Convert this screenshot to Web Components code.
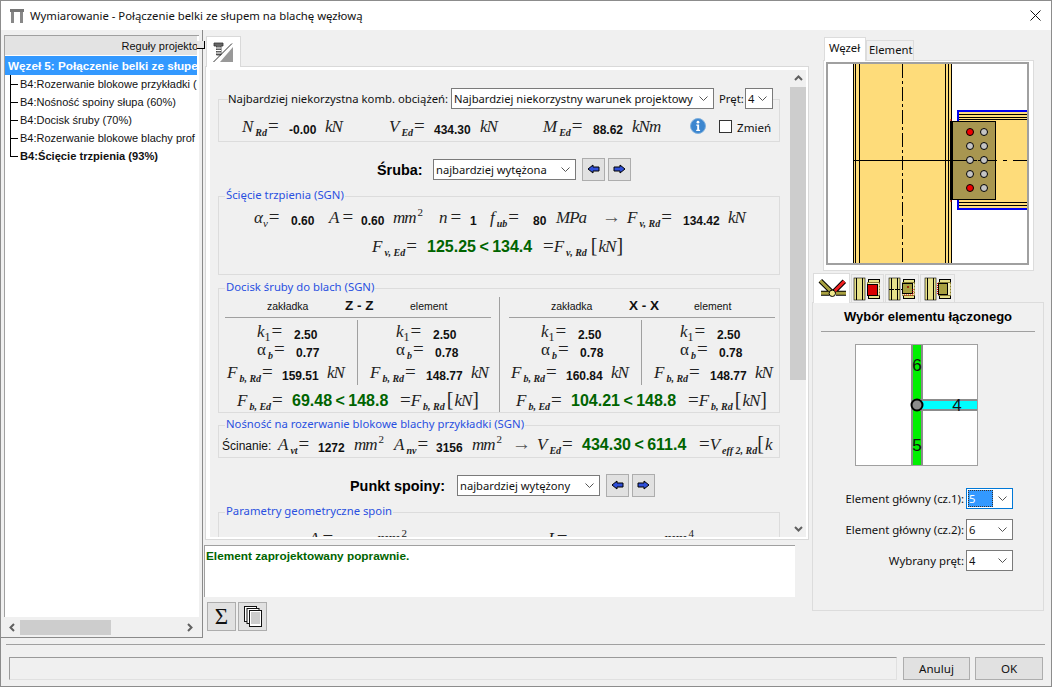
<!DOCTYPE html>
<html lang="pl">
<head>
<meta charset="utf-8">
<title>Wymiarowanie</title>
<style>
	html, body { margin: 0; background: #f0f0f0; }
</style>
</head>
<body>
<app-window></app-window>
<script>
const UI_FONT = `"Noto Sans", sans-serif`;
const ARIAL = `"Liberation Sans", sans-serif`;
const SERIF = `"Liberation Serif", serif`;

class Base extends HTMLElement {
	constructor() {
		super();
		this.attachShadow({ mode: "open" });
	}
	connectedCallback() {
		this.shadowRoot.innerHTML = `<style>${this.styles()}</style>${this.markup()}`;
	}
	styles() { return ":host { display: block; }"; }
	markup() { return "<slot></slot>"; }
	attr(name, fallback = "") { return this.getAttribute(name) ?? fallback; }
}

/* ---------- small widgets ---------- */

class UiSelect extends Base {
	styles() {
		return `
			:host { display: block; box-sizing: border-box; height: 21px; background: #fff; border: 1px solid #7a7a7a;
				font: 11.2px ${UI_FONT}; color: #111; }
			.box { display: flex; align-items: center; height: 100%; padding-left: 2px; white-space: nowrap; overflow: hidden; }
			.txt { flex: 1; overflow: hidden; }
			:host([focused]) { border-color: #0078d7; }
			:host([focused]) .txt { flex: none; width: 24px; background: #3399ff; color: #fff; outline: 1px dotted #333; outline-offset: -1px; margin-right: auto; padding-left: 1px; margin-left: -1px; line-height: 17px; }
			svg { flex: none; margin: 0 5px 0 3px; }
		`;
	}
	markup() {
		return `<div class="box"><span class="txt"><slot></slot></span>
			<svg width="9" height="5" viewBox="0 0 9 5"><path d="M.5.5 4.5 4.5 8.5.5" fill="none" stroke="#555"/></svg></div>`;
	}
}

class ArrowBtn extends Base {
	styles() {
		return `:host { display: block; box-sizing: border-box; width: 23px; height: 23px; background: #e1e1e1; border: 1px solid #adadad; }
			svg { display: block; margin: 5px 0 0 4px; }`;
	}
	markup() {
		const left = this.attr("dir") === "left";
		const pts = left ? "1,5 6,1 6,3 12,3 12,7 6,7 6,9" : "12,5 7,1 7,3 1,3 1,7 7,7 7,9";
		return `<svg width="13" height="10" viewBox="0 0 13 10"><polygon points="${pts}" fill="#2f4fd8" stroke="#000"/></svg>`;
	}
}

class UiScroll extends Base {
	styles() {
		const horizontal = this.attr("dir") === "h";
		return `:host { display: flex; flex-direction: ${horizontal ? "row" : "column"}; background: #f0f0f0; }
			.end { flex: none; display: flex; align-items: center; justify-content: center; ${horizontal ? "width: 15px" : "height: 17px"}; }
			.thumb { flex: none; background: #cdcdcd; ${horizontal ? `width: ${this.attr("size")}px` : `height: ${this.attr("size")}px`}; }
			.rest { flex: 1; }`;
	}
	markup() {
		const horizontal = this.attr("dir") === "h";
		const chev = (d) => `<svg width="9" height="9" viewBox="0 0 9 9"><path d="${d}" fill="none" stroke="#606060" stroke-width="2"/></svg>`;
		const first = horizontal ? "M6 1 2.5 4.5 6 8" : "M1 6 4.5 2.5 8 6";
		const last = horizontal ? "M3 1 6.5 4.5 3 8" : "M1 3 4.5 6.5 8 3";
		return `<div class="end">${chev(first)}</div><div class="thumb"></div><div class="rest"></div><div class="end">${chev(last)}</div>`;
	}
}

/* ---------- title bar ---------- */

class TitleBar extends Base {
	styles() {
		return `:host { display: flex; align-items: center; background: #fff; font: 11.33px ${UI_FONT}; color: #111; padding-left: 9px; }
			.name { margin-left: 6px; flex: 1; white-space: nowrap; }
			.close { margin-right: 10px; }`;
	}
	markup() {
		return `<svg width="14" height="14" viewBox="0 0 14 14">
				<rect x="0" y="0" width="14" height="3" fill="#777"/>
				<rect x="1" y="3" width="3" height="11" fill="#888"/><rect x="10" y="3" width="3" height="11" fill="#888"/>
			</svg>
			<span class="name">Wymiarowanie - Połączenie belki ze słupem na blachę węzłową</span>
			<svg class="close" width="11" height="11" viewBox="0 0 11 11"><path d="M.5.5 10.5 10.5M10.5.5.5 10.5" stroke="#111" fill="none"/></svg>`;
	}
}

/* ---------- tree ---------- */

class TreeItem extends Base {
	styles() {
		const stem = this.hasAttribute("last") ? "50%" : "100%";
		return `:host { display: flex; height: 18px; align-items: center; font: ${this.hasAttribute("last") ? "bold 11.15px" : "11px"} ${ARIAL}; color: #111; white-space: nowrap; }
			.conn { flex: none; align-self: stretch; width: 8px; margin: 0 2px 0 5px;
				background: linear-gradient(#000,#000) left top / 1px ${stem} no-repeat, linear-gradient(#000,#000) left center / 100% 1px no-repeat; }`;
	}
	markup() {
		return `<span class="conn"></span><slot></slot>`;
	}
}

class TreePanel extends Base {
	styles() {
		return `:host { display: block; position: relative; box-sizing: border-box; height: 608px; padding: 5px 0 0 3px; border-right: 1px solid #8a8a8a; border-bottom: 1px solid #8a8a8a; }
			.box { box-sizing: border-box; width: 195px; height: 582px; background: #fff; border-left: 1px solid #a0a0a0; border-top: 1px solid #a0a0a0; }
			.clip { width: 192px; overflow: hidden; }
			.head { height: 19px; background: #e3e3e3; text-align: right; font: 11px/20px ${ARIAL}; color: #111; white-space: nowrap; margin-bottom: 1px; }
			.head span { margin-right: -1px; }
			.root { height: 19px; padding-left: 3px; background: #3399ff; color: #fff; font: bold 11.7px/19px ${ARIAL}; white-space: nowrap; overflow: hidden; }
			.grip { position: absolute; left: 196px; top: 11px; width: 7px; height: 7px; background: #e6e6e6; border-bottom: 1px solid #000; border-right: 1px solid #000; }
			ui-scroll { width: 192px; height: 15px; margin: 3px 0 0 1px; }`;
	}
	markup() {
		return `<div class="box"><div class="clip">
				<div class="head"><span>Reguły projekto</span></div>
				<div class="root">Węzeł 5: Połączenie belki ze słupem</div>
				<tree-item>B4:Rozerwanie blokowe przykładki (</tree-item>
				<tree-item>B4:Nośność spoiny słupa (60%)</tree-item>
				<tree-item>B4:Docisk śruby (70%)</tree-item>
				<tree-item>B4:Rozerwanie blokowe blachy prof</tree-item>
				<tree-item last>B4:Ścięcie trzpienia (93%)</tree-item>
			</div></div>
			<div class="grip"></div>
			<ui-scroll dir="h" size="91"></ui-scroll>`;
	}
}

/* ---------- math pieces ---------- */

class MVar extends Base {
	styles() {
		return `:host { display: inline-block; font: italic 17px ${SERIF}; color: #222; white-space: nowrap; }
			.up { font-style: normal; }
			.s { font: italic bold 10px ${SERIF}; position: relative; top: 4px; margin-left: 2px; }
			.s.plain { font: italic 11px ${SERIF}; margin-left: 0; }
			.s.roman { font: 12px ${SERIF}; margin-left: 0; }
			.eq { font-style: normal; font-size: 19px; margin-left: 1px; }`;
	}
	markup() {
		const sub = this.attr("s");
		const cls = this.hasAttribute("roman") ? "s roman" : this.hasAttribute("plain") ? "s plain" : "s";
		const eq = this.hasAttribute("noeq") ? "" : `<span class="eq">=</span>`;
		return `<span class="${this.hasAttribute("up") ? "up" : ""}">${this.attr("n")}</span><span class="${cls}">${sub}</span>${eq}`;
	}
}

class MVal extends Base {
	styles() {
		const big = this.hasAttribute("big");
		return `:host { display: inline-block; font: bold ${big ? "16px" : "12px"} ${ARIAL}; color: ${big ? "#006400" : "#111"}; white-space: nowrap; word-spacing: ${big ? "-1px" : "0"}; }
			span { vertical-align: ${big ? "0" : "-2px"}; }`;
	}
	markup() {
		return `<span><slot></slot></span>`;
	}
}

class MUnit extends Base {
	styles() {
		return `:host { display: inline-block; font: italic 17px ${SERIF}; color: #222; letter-spacing: -1px; white-space: nowrap; }
			.p { font: 11px ${SERIF}; position: relative; top: -7px; margin-left: 2px; }`;
	}
	markup() {
		const pow = this.attr("p");
		return `<slot></slot>${pow ? `<span class="p">${pow}</span>` : ""}`;
	}
}

class MRes extends Base {
	styles() {
		return `:host { display: inline-block; font: 19px ${SERIF}; color: #222; white-space: nowrap; }
			.br { font-size: 20px; font-weight: 100; margin: 0 1px; }
			i { font-size: 17px; letter-spacing: -1px; }`;
	}
	markup() {
		return `=<m-var n="${this.attr("n")}" s="${this.attr("s")}" noeq></m-var><span class="br" style="margin-left:${this.attr("pad", 2)}px">[</span><i>${this.attr("u", "kN")}</i><span class="br">${this.attr("u") ? "" : "]"}</span>`;
	}
}

/* every child starts at the x given in `at`; `origin` is the x of the row's left edge */
class CalcRow extends Base {
	styles() {
		const at = this.attr("at").trim().split(/\s+/).map(Number);
		const origin = Number(this.attr("origin", 219));
		const tracks = at.slice(1).map((x, i) => `${x - at[i]}px`).join(" ");
		return `:host { display: grid; align-items: baseline; white-space: nowrap;
			padding-left: ${at[0] - origin}px; grid-template-columns: ${tracks} auto; }`;
	}
}

/* ---------- calculation panel ---------- */

class GroupBox extends Base {
	styles() {
		return `:host { display: block; position: relative; box-sizing: border-box; width: 562px; border: 1px solid #dcdcdc; }
			.legend { position: absolute; left: 6px; top: -11px; padding: 0 1px; background: #f0f0f0; color: #2a50e0; font: 11.3px/18px ${UI_FONT}; white-space: nowrap; }`;
	}
	markup() {
		return `<div class="legend">${this.attr("legend")}</div><slot></slot>`;
	}
}

class BearingCol extends Base {
	styles() {
		return `:host { display: block; box-sizing: border-box; width: 280px; height: 115px; margin-top: 8px; }
			:host([second]) { width: 280px; border-left: 1px solid #a0a0a0; padding-left: 3px; }
			.head { height: 18px; font: 10.5px/18px ${ARIAL}; color: #111; }
			.axis { font: bold 13.5px ${ARIAL}; }
			.rule { height: 1px; background: #a0a0a0; width: 266px; margin: 2px 0 0 6px; }
			.cells { display: flex; height: 65px; margin-top: 2px; }
			.cell { box-sizing: border-box; flex: none; }
			.a { width: 138px; }
			.b { width: 140px; border-left: 1px solid #a0a0a0; }
			.k { height: 18px; box-sizing: border-box; }
			.al { height: 23px; }
			.tot { margin-top: 3px; }`;
	}
	cell(cls, dx, d) {
		return `<div class="cell ${cls}">
			<calc-row class="k" origin="${dx}" at="${dx + 38} ${dx + 75}"><m-var n="k" s="1" roman></m-var><m-val>${d[0]}</m-val></calc-row>
			<calc-row class="al" origin="${dx}" at="${dx + 38} ${dx + 77}"><m-var n="α" s="b" up></m-var><m-val>${d[1]}</m-val></calc-row>
			<calc-row origin="${dx}" at="${cls === "a" ? "8 63 108" : `${dx + 12} ${dx + 68} ${dx + 113}`}"><m-var n="F" s="b, Rd"></m-var><m-val>${d[2]}</m-val><m-unit>kN</m-unit></calc-row>
		</div>`;
	}
	markup() {
		const d = this.attr("vals").split("|");
		const t = this.attr("total-at");
		return `<calc-row class="head" origin="0" at="48 126 191">
				<span>zakładka</span><span class="axis">${this.attr("axis")}</span><span>element</span>
			</calc-row>
			<div class="rule"></div>
			<div class="cells">${this.cell("a", 0, d.slice(0, 3))}${this.cell("b", 0, d.slice(3, 6))}</div>
			<calc-row class="tot" origin="0" at="${t}"><m-var n="F" s="b, Ed"></m-var><m-val big>${this.attr("total")}</m-val><m-res n="F" s="b, Rd"></m-res></calc-row>`;
	}
}

class CalcPanel extends Base {
	styles() {
		return `:host { display: block; padding-top: 6px; font: 11.3px ${UI_FONT}; color: #111; }
			.tab { box-sizing: border-box; width: 35px; height: 31px; margin: 0 0 -1px 3px; background: #fff; border: 1px solid #d9d9d9; border-bottom: 0; position: relative; z-index: 1; }
			.tab svg { display: block; margin: 4px 0 0 6px; }
			.pane { box-sizing: border-box; display: flex; width: 604px; margin-left: 2px; height: 474px; background: #fff; border: 1px solid #d9d9d9; padding: 3px 2px 2px 4px; }
			.doc { width: 580px; height: 467px; background: #f0f0f0; overflow: hidden; padding-left: 8px; box-sizing: border-box; flex: none; }
			ui-scroll { width: 16px; }
			.g1 { margin-top: 29px; height: 43px; }
			.g1 .legend { position: absolute; left: 9px; top: -12px; height: 21px; display: flex; align-items: center; background: #f0f0f0; white-space: nowrap; }
			.g1 .legend span { display: block; }
			.g1 calc-row { margin-top: 15px; }
			.info { align-self: center; margin-top: -1px; }
			.chk { display: block; box-sizing: border-box; width: 13px; height: 13px; background: #fff; border: 1px solid #333; align-self: center; }
			.zm { font-size: 11.6px; }
			.pick { display: flex; align-items: center; height: 23px; white-space: nowrap; }
			.pick b { font: bold 14.4px ${ARIAL}; color: #000; }
			.pick arrow-btn { margin-left: 3px; }
			.g2 { margin-top: 15px; height: 79px; }
			.g3 { margin-top: 13px; height: 125px; display: flex; align-items: flex-start; }
			.g4 { margin-top: 12px; height: 33px; }
			.g4 .row { overflow: hidden; height: 31px; }
			.g5 { margin-top: 15px; height: 90px; }
			.cin { font: 12px ${ARIAL}; }
			.arr { font: 19px ${SERIF}; color: #555; }
			.msg { box-sizing: border-box; width: 591px; height: 52px; margin: 5px 0 0 1px; background: #fff; border-left: 1px solid #a0a0a0; border-top: 1px solid #a0a0a0; padding: 3px 0 0 1px; font: bold 11.8px ${ARIAL}; color: #006400; }
			.tools { display: flex; gap: 2px; margin: 5px 0 0 4px; }
			.tools div { box-sizing: border-box; width: 29px; height: 29px; background: #e1e1e1; border: 1px solid #adadad; display: flex; align-items: center; justify-content: center; font: 23px ${SERIF}; color: #111; }`;
	}
	markup() {
		return `<div class="tab"><svg width="21" height="22" viewBox="0 0 21 22">
				<path d="M1 2h9v3H8v9H3.5V5H1z" fill="#666" stroke="#333" stroke-width=".8"/>
				<path d="M3 7h5M3 9.5h5M3 12h5" stroke="#fff"/>
				<path d="M7 21h13V6z" fill="#999"/>
				<path d="M.5 21 19 2.5" stroke="#333" fill="none"/>
			</svg></div>
			<div class="pane">
				<div class="doc">
					<group-box class="g1">
						<div class="legend">
							<span style="width:223px">Najbardziej niekorzystna komb. obciążeń:</span>
							<ui-select style="width:263px">Najbardziej niekorzystny warunek projektowy</ui-select>
							<span style="margin-left:5px;width:26px">Pręt:</span>
							<ui-select style="width:28px">4</ui-select>
						</div>
						<calc-row at="242 289 325 389 434 480 543 593 632 690 719 737">
							<m-var n="N" s="Rd"></m-var><m-val>-0.00</m-val><m-unit>kN</m-unit>
							<m-var n="V" s="Ed"></m-var><m-val>434.30</m-val><m-unit>kN</m-unit>
							<m-var n="M" s="Ed"></m-var><m-val>88.62</m-val><m-unit>kNm</m-unit>
							<svg class="info" width="16" height="16" viewBox="0 0 16 16">
								<circle cx="8" cy="8" r="7.5" fill="#3c86cf" stroke="#7fb0de"/>
								<circle cx="8" cy="4.2" r="1.4" fill="#fff"/><path d="M6.3 6.5h2.8v5.2h1v1.2H6.2v-1.2h1V7.7h-.9z" fill="#fff"/>
							</svg>
							<span class="chk"></span><span class="zm">Zmień</span>
						</calc-row>
					</group-box>
					<div class="pick" style="margin-top:16px">
						<b style="margin-left:159px;width:56px">Śruba:</b>
						<ui-select style="width:143px">najbardziej wytężona</ui-select>
						<arrow-btn dir="left" style="margin-left:6px"></arrow-btn><arrow-btn dir="right"></arrow-btn>
					</div>
					<group-box class="g2" legend="Ścięcie trzpienia (SGN)">
						<calc-row style="margin-top:9px" at="254 291 329 361 393 439 470 490 533 556 602 627 683 728">
							<m-var n="α" s="v" plain></m-var><m-val>0.60</m-val>
							<m-var n="A"></m-var><m-val>0.60</m-val><m-unit p="2">mm</m-unit>
							<m-var n="n"></m-var><m-val>1</m-val>
							<m-var n="f" s="ub"></m-var><m-val>80</m-val><m-unit>MPa</m-unit>
							<span class="arr">→</span>
							<m-var n="F" s="v, Rd"></m-var><m-val>134.42</m-val><m-unit>kN</m-unit>
						</calc-row>
						<calc-row style="margin-top:6px" at="372 427 543">
							<m-var n="F" s="v, Ed"></m-var><m-val big>125.25 &lt; 134.4</m-val><m-res n="F" s="v, Rd" pad="4"></m-res>
						</calc-row>
					</group-box>
					<group-box class="g3" legend="Docisk śruby do blach (SGN)">
						<bearing-col axis="Z - Z" vals="2.50|0.77|159.51|2.50|0.78|148.77" total="69.48 &lt; 148.8" total-at="18 73 181"></bearing-col>
						<bearing-col second axis="X - X" vals="2.50|0.78|160.84|2.50|0.78|148.77" total="104.21 &lt; 148.8" total-at="13 68 185"></bearing-col>
					</group-box>
					<group-box class="g4" legend="Nośność na rozerwanie blokowe blachy przykładki (SGN)">
						<div class="row">
							<calc-row style="margin-top:6px" at="222 278 318 354 394 436 472 512 537 582 699">
								<span class="cin">Ścinanie:</span>
								<m-var n="A" s="vt"></m-var><m-val>1272</m-val><m-unit p="2">mm</m-unit>
								<m-var n="A" s="nv"></m-var><m-val>3156</m-val><m-unit p="2">mm</m-unit>
								<span class="arr">→</span>
								<m-var n="V" s="Ed"></m-var><m-val big>434.30 &lt; 611.4</m-val><m-res n="V" s="eff 2, Rd" u="k" pad="0"></m-res>
							</calc-row>
						</div>
					</group-box>
					<div class="pick" style="margin-top:16px">
						<b style="margin-left:132px;width:107px">Punkt spoiny:</b>
						<ui-select style="width:143px">najbardziej wytężony</ui-select>
						<arrow-btn dir="left" style="margin-left:6px"></arrow-btn><arrow-btn dir="right"></arrow-btn>
					</div>
					<group-box class="g5" legend="Parametry geometryczne spoin">
						<calc-row style="margin-top:14px" at="309 343 377 548 583 664">
							<m-var n="A"></m-var><m-val>88.88</m-val><m-unit p="2">mm</m-unit>
							<m-var n="I"></m-var><m-val>2540.80</m-val><m-unit p="4">mm</m-unit>
						</calc-row>
					</group-box>
				</div>
				<ui-scroll size="293"></ui-scroll>
			</div>
			<div class="msg">Element zaprojektowany poprawnie.</div>
			<div class="tools">
				<div>Σ</div>
				<div><svg width="20" height="21" viewBox="0 0 20 21">
					<rect x="1.5" y=".5" width="12" height="15" fill="#fff" stroke="#111"/>
					<rect x="4" y="2.5" width="12" height="15" fill="#fff" stroke="#111"/>
					<rect x="6.5" y="4.5" width="12" height="16" fill="#fff" stroke="#111"/>
					<path d="M8 7h9M8 9h9M8 11h9M8 13h9M8 15h9M8 17h9" stroke="#999"/>
				</svg></div>
			</div>`;
	}
}

/* ---------- right column ---------- */

class JointDrawing extends Base {
	styles() {
		return `:host { display: block; box-sizing: border-box; width: 203px; height: 203px; border: 2px solid #a0a0a0; background: #fff; }
			svg { display: block; }`;
	}
	markup() {
		const bolts = [131, 145, 159, 173, 187].flatMap((y) => [970, 984].map((x) => {
			const red = x === 970 && (y === 131 || y === 187);
			const r = `<circle cx="${x}" cy="${y}" r="3.5" fill="${red ? "#f00000" : "#c4c4c4"}" stroke="#000"/>`;
			return y === 159 ? `<path d="M${x - 6} ${y}.5h12" stroke="#000"/>${r}` : r;
		})).join("");
		const flanges = [113.5, 116.5, 118.5, 201.5, 204.5]
			.map((y) => `<path d="M959 ${y}H1027" stroke="#000"/>`).join("");
		const colLines = [853.5, 855.5, 859.5, 945.5, 948.5, 951.5]
			.map((x) => `<path d="M${x} 63V262" stroke="#000"/>`).join("");
		return `<svg width="199" height="199" viewBox="828 63 199 199">
			<rect x="853" y="63" width="99" height="199" fill="#fedc7a"/>
			<rect x="958" y="110" width="69" height="98" fill="#fedc7a"/>
			${colLines}${flanges}
			<path d="M1027 110H958V208H1027" fill="none" stroke="#0000f0" stroke-width="2"/>
			<path d="M902.5 63V262" stroke="#000" stroke-dasharray="14 3 3 3"/>
			<path d="M853 159.5H950" stroke="#000"/>
			<rect x="950.5" y="120.5" width="45" height="78" fill="#a89650" stroke="#000"/>
			<rect x="950" y="120" width="3" height="79" fill="#000"/>
			<path d="M951 118v2M951 199v2" stroke="#c00000"/>
			<path d="M953 159.5H1027" stroke="#000" stroke-dasharray="14 6 4 6"/>
			${bolts}
		</svg>`;
	}
}

class MemberPicker extends Base {
	styles() {
		return `:host { display: block; box-sizing: border-box; width: 123px; height: 122px; border: 1px solid #a0a0a0; background: #fff; }
			svg { display: block; }
			text { font: 17px ${ARIAL}; fill: #111; text-anchor: middle; }`;
	}
	markup() {
		return `<svg width="121" height="120" viewBox="856 345 121 120">
			<rect x="911" y="345" width="12" height="120" fill="#8c8c8c"/>
			<rect x="913" y="345" width="8" height="120" fill="#00f000"/>
			<rect x="917" y="399" width="60" height="12" fill="#8c8c8c"/>
			<rect x="921" y="401" width="56" height="8" fill="#00ffff"/>
			<text x="917" y="371">6</text><text x="917" y="451">5</text><text x="957" y="411">4</text>
			<circle cx="917" cy="405" r="5.5" fill="#8c8c8c" stroke="#000" stroke-width="2"/>
		</svg>`;
	}
}

const TAB_ICONS = {
	column(ox) {
		return `<rect x="${ox}" y="276" width="11" height="22" fill="#e6e08a" stroke="#000" stroke-width=".6"/>
			<path d="M${ox + 2.5} 276v22M${ox + 8.5} 276v22" stroke="#000"/>
			<rect x="${ox + 14.5}" y="277.5" width="11" height="3" fill="#e6e08a" stroke="#000"/>
			<rect x="${ox + 14.5}" y="293.5" width="11" height="3" fill="#e6e08a" stroke="#000"/>
			<rect x="${ox + 13.5}" y="280.5" width="12" height="13" fill="#f3efb8" stroke="#8a7d20" stroke-dasharray="2 1"/>`;
	},
};

class SideTabs extends Base {
	styles() {
		return `:host { display: flex; height: 30px; padding-left: 1px; align-items: flex-end; gap: 1px; }
			div { box-sizing: border-box; height: 28px; background: #f0f0f0; border: 1px solid #dcdcdc; border-bottom: 0; }
			.on { height: 30px; background: #fff; margin-bottom: -1px; position: relative; }
			svg { display: block; }`;
	}
	markup() {
		return `<div class="on" style="width:37px"><svg width="37" height="28" viewBox="813 271 37 28">
				<path d="M819.3 277.7 830.7 289M843.3 278.3 832.7 289M820 290.3H828.5M835 290.3H845" stroke="#000" stroke-width="5" fill="none"/>
				<path d="M819.3 277.7 830.7 289M820 290.3H828.5M835 290.3H845" stroke="#a8a040" stroke-width="3" fill="none"/>
				<path d="M843.3 278.3 832.7 289" stroke="#f02020" stroke-width="3" fill="none"/>
				<circle cx="831.3" cy="290.3" r="3.2" fill="#f0e88c" stroke="#000"/>
			</svg></div>
			<div style="width:33px"><svg width="31" height="26" viewBox="852 273 31 26">
				${TAB_ICONS.column(854)}
				<rect x="867.5" y="282.5" width="10" height="11" fill="#d80000" stroke="#000"/>
			</svg></div>
			<div style="width:34px"><svg width="32" height="26" viewBox="885 273 32 26">
				${TAB_ICONS.column(888)}
				<path d="M888 287.5H901" stroke="#000" stroke-dasharray="2 1"/>
				<rect x="901.5" y="281.5" width="10" height="10" fill="#a8a040" stroke="#000"/>
				<path d="M912 287v6H903" stroke="#e00000" stroke-dasharray="1 1" fill="none"/>
				<circle cx="907" cy="285" r="1" fill="#900"/>
			</svg></div>
			<div style="width:35px"><svg width="33" height="26" viewBox="920 273 33 26">
				${TAB_ICONS.column(924)}
				<rect x="937.5" y="281.5" width="9" height="11" fill="#a8a040" stroke="#000"/>
				<path d="M936.5 281v12" stroke="#e00000" stroke-dasharray="1 1"/>
			</svg></div>`;
	}
}

class FieldRow extends Base {
	styles() {
		return `:host { display: flex; justify-content: flex-end; align-items: center; height: 20px; margin-bottom: 11px; padding-right: 30px; font: 11.4px ${UI_FONT}; color: #111; white-space: nowrap; }
			ui-select { width: 47px; height: 21px; margin-left: 2px; }`;
	}
	markup() {
		return `<slot></slot><ui-select ${this.hasAttribute("focused") ? "focused" : ""}>${this.attr("value")}</ui-select>`;
	}
}

class SidePanel extends Base {
	styles() {
		return `:host { display: block; padding: 7px 7px 0 3px; font: 11.3px ${UI_FONT}; color: #111; }
			.tabs { display: flex; align-items: flex-end; height: 23px; margin-left: 12px; }
			.tabs span { box-sizing: border-box; height: 20px; line-height: 18px; padding: 0 2px; background: #f0f0f0; border: 1px solid #dcdcdc; border-bottom: 0; }
			.tabs .on { height: 24px; line-height: 20px; background: #fff; width: 42px; margin-bottom: -1px; position: relative; z-index: 1; padding: 0 4px; }
			.tabs .off { width: 48px; }
			.view { box-sizing: border-box; width: 211px; height: 211px; margin-left: 11px; background: #fff; border: 1px solid #dcdcdc; padding: 1px 0 0 2px; }
			side-tabs { margin-top: 1px; }
			.pane { box-sizing: border-box; height: 309px; border: 1px solid #dcdcdc; background: #f0f0f0; }
			h3 { margin: 5px 0 0; font: bold 13px/18px ${ARIAL}; text-align: center; color: #000; height: 18px; }
			.rule { height: 1px; margin: 5px 8px 0; background: #a0a0a0; }
			member-picker { margin: 12px 0 0 42px; }
			.fields { margin-top: 22px; }`;
	}
	markup() {
		return `<div class="tabs"><span class="on">Węzeł</span><span class="off">Element</span></div>
			<div class="view"><joint-drawing></joint-drawing></div>
			<side-tabs></side-tabs>
			<div class="pane">
				<h3>Wybór elementu łączonego</h3>
				<div class="rule"></div>
				<member-picker></member-picker>
				<div class="fields">
					<field-row value="5" focused>Element główny (cz.1):</field-row>
					<field-row value="6">Element główny (cz.2):</field-row>
					<field-row value="4">Wybrany pręt:</field-row>
				</div>
			</div>`;
	}
}

/* ---------- footer and window ---------- */

class DialogFooter extends Base {
	styles() {
		return `:host { display: block; padding: 0 6px 0 5px; font: 11.6px ${UI_FONT}; color: #111; }
			.rule { height: 1px; background: #a0a0a0; }
			.row { display: flex; margin: 12px 0 0 3px; height: 23px; }
			.status { box-sizing: border-box; width: 888px; border: 1px solid #a0a0a0; border-color: #9a9a9a #e0e0e0 #e0e0e0 #9a9a9a; }
			.btn { box-sizing: border-box; height: 23px; line-height: 21px; text-align: center; background: #e1e1e1; border: 1px solid #adadad; }`;
	}
	markup() {
		return `<div class="rule"></div>
			<div class="row">
				<div class="status"></div>
				<div class="btn" style="width:67px;margin-left:6px">Anuluj</div>
				<div class="btn" style="width:68px;margin-left:5px">OK</div>
			</div>`;
	}
}

class AppWindow extends Base {
	styles() {
		return `:host { display: grid; grid-template-rows: 29px 614px 42px; box-sizing: border-box; width: 1052px; height: 687px; border: 1px solid #8c8c8c; background: #f0f0f0; overflow: hidden; }
			.main { display: grid; grid-template-columns: 202px 606px 1fr; }`;
	}
	markup() {
		return `<title-bar></title-bar>
			<div class="main"><tree-panel></tree-panel><calc-panel></calc-panel><side-panel></side-panel></div>
			<dialog-footer></dialog-footer>`;
	}
}

customElements.define("ui-select", UiSelect);
customElements.define("arrow-btn", ArrowBtn);
customElements.define("ui-scroll", UiScroll);
customElements.define("title-bar", TitleBar);
customElements.define("tree-item", TreeItem);
customElements.define("tree-panel", TreePanel);
customElements.define("m-var", MVar);
customElements.define("m-val", MVal);
customElements.define("m-unit", MUnit);
customElements.define("m-res", MRes);
customElements.define("calc-row", CalcRow);
customElements.define("group-box", GroupBox);
customElements.define("bearing-col", BearingCol);
customElements.define("calc-panel", CalcPanel);
customElements.define("joint-drawing", JointDrawing);
customElements.define("member-picker", MemberPicker);
customElements.define("side-tabs", SideTabs);
customElements.define("field-row", FieldRow);
customElements.define("side-panel", SidePanel);
customElements.define("dialog-footer", DialogFooter);
customElements.define("app-window", AppWindow);
</script>
</body>
</html>
